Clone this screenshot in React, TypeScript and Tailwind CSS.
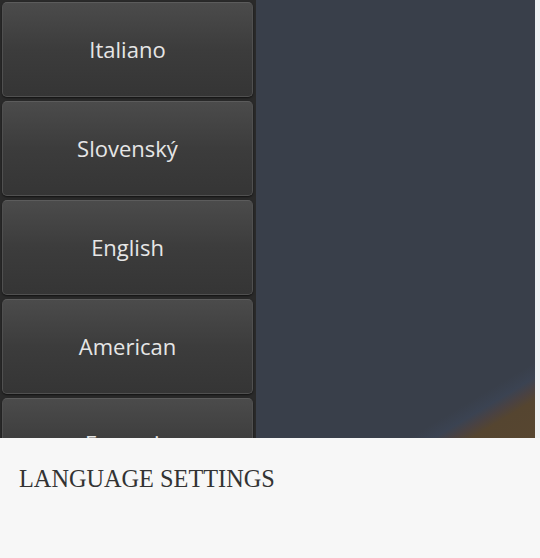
const languages = ["Italiano", "Slovenský", "English", "American", "Français"]

export default function App() {
  return (
    <div className="h-[558px] w-[540px] bg-[#f7f7f7]">
      {/* Screenshot */}
      <div className="flex h-[438px] w-[540px]">
        <div className="relative flex h-full w-[535px] overflow-hidden bg-[#393f4a]">
          <div className="flex h-full w-[256px] flex-col gap-[4px] bg-[#2a2a2a] pl-[2px] pr-[2px] pt-[2px]">
            {languages.map((lang, i) => (
              <div
                key={lang}
                className={
                  "flex h-[95px] w-[251px] shrink-0 items-center justify-center rounded-[5px] border border-[#505050] border-t-[#5c5c5c] bg-[linear-gradient(180deg,#4b4b4b_0%,#3c3c3c_50%,#353535_100%)] shadow-[0_1px_2px_rgba(0,0,0,0.6)] " +
                  (i === languages.length - 1 ? "pb-[4px]" : "")
                }
              >
                <span className="font-['Open_Sans',sans-serif] text-[22px] text-[#e6e6e6]">
                  {lang}
                </span>
              </div>
            ))}
          </div>
          {/* brown corner */}
          <div className="absolute inset-0 bg-[linear-gradient(149deg,transparent_90%,#3b4352_92%,#4a4242_93.5%,#554530_95%,#574630_100%)]" />
        </div>
        <div className="h-full w-[5px] bg-[#eef1f3]" />
      </div>
      <div className="px-[19px] pt-[29px]">
        <h2 className="font-['Liberation_Serif',serif] text-[24.3px] leading-none text-[#333]">
          LANGUAGE SETTINGS
        </h2>
      </div>
    </div>
  )
}
